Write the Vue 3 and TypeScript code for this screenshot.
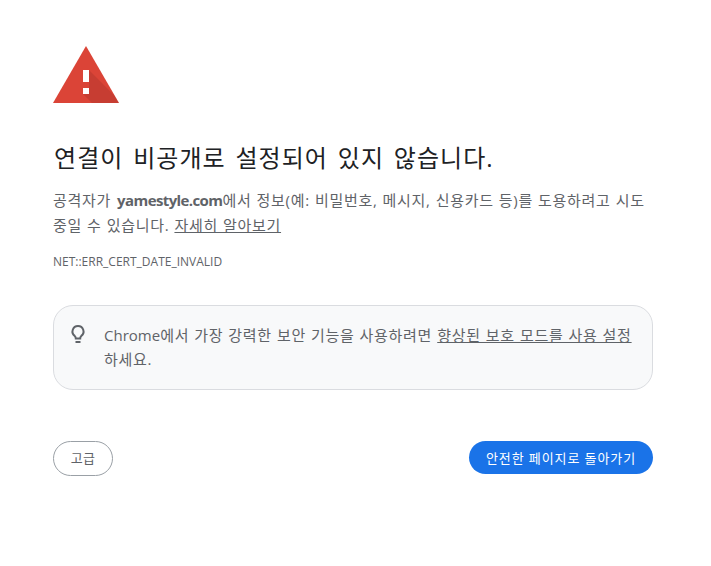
<script setup lang="ts">
const heading: string = '연결이 비공개로 설정되어 있지 않습니다.'
</script>

<template>
  <main class="page">
    <svg class="warn" viewBox="0 0 66 57" width="66" height="57" aria-hidden="true">
      <polygon points="33,0 66,57 0,57" fill="#db4437" />
      <polygon points="36,24 61.900,49.900 66,57 39,57 30,48 36,42" fill="#000" opacity="0.09" />
      <rect x="30" y="24" width="6" height="12" fill="#fff" />
      <rect x="30" y="42" width="6" height="6" fill="#fff" />
    </svg>
    <h1>{{ heading }}</h1>
    <p class="desc">공격자가 <strong>yamestyle.com</strong>에서 정보(예: 비밀번호, 메시지, 신용카드 등)를 도용하려고 시도 중일 수 있습니다. <a>자세히 알아보기</a></p>
    <div class="code">NET::ERR_CERT_DATE_INVALID</div>
    <section class="tip">
      <svg class="bulb" viewBox="0 0 20 22" width="20" height="22" aria-hidden="true">
        <path d="M10 2a5.500 5.500 0 0 0-3.300 9.900c.8.700 1.100 1.500 1.100 2.600h4.400c0-1.100.3-1.900 1.100-2.600A5.500 5.500 0 0 0 10 2z" fill="none" stroke="#5f6368" stroke-width="2" />
        <rect x="7.500" y="17" width="5" height="2" fill="#5f6368" />
      </svg>
      <p><span class="brand">Chrome</span>에서 가장 강력한 보안 기능을 사용하려면 <a>향상된 보호 모드를 사용 설정</a>하세요.</p>
    </section>
    <div class="actions">
      <button class="adv">고급</button>
      <button class="back">안전한 페이지로 돌아가기</button>
    </div>
  </main>
</template>

<style scoped>
.page {
  width: 600px;
  padding: 46px 0 0 53px;
  font-family: "Open Sans", "Noto Sans CJK KR", sans-serif;
  color: #5f6368;
}
.warn { display: block; }
h1 {
  margin: 39px 0 0;
  padding-left: 1px;
  font-size: 24px;
  line-height: 32px;
  font-weight: 400;
  letter-spacing: 1.050px;
  word-spacing: 2.500px;
  color: #202124;
}
.desc {
  margin: 14px 0 0;
  font-size: 15px;
  line-height: 25px;
  letter-spacing: 0.700px;
  word-spacing: 0.500px;
}
strong { font-weight: 700; letter-spacing: -0.600px; margin-left: 1px; }
a { text-decoration: underline; color: #5f6368; }
.code {
  margin: 15px 0 0;
  font-size: 12px;
  line-height: 18px;
}
.tip {
  margin-top: 34px;
  height: 85px;
  box-sizing: border-box;
  display: flex;
  gap: 15px;
  padding: 17px 17px 0 15px;
  background: #f8f9fa;
  border: 1px solid #dadce0;
  border-radius: 20px;
}
.bulb { flex: none; margin-top: 1px; margin-left: -1px; margin-right: 1px; }
.tip p {
  margin: 0;
  font-size: 15px;
  line-height: 24px;
  letter-spacing: 0.700px;
  word-spacing: 0.500px;
}
.brand { letter-spacing: 0; }
.actions {
  margin-top: 51px;
  display: flex;
  justify-content: space-between;
  align-items: center;
}
button {
  font-family: inherit;
  font-size: 13px;
  border-radius: 18px;
  padding: 0;
  letter-spacing: 0.400px;
}
.adv {
  width: 60px;
  height: 35px;
  padding-bottom: 2px;
  background: #fff;
  border: 1px solid #9aa0a6;
  color: #5f6368;
}
.back {
  width: 184px;
  height: 33px;
  margin-top: -2px;
  background: #1a73e8;
  border: 0;
  color: #fff;
  letter-spacing: 0.900px;
}
</style>
